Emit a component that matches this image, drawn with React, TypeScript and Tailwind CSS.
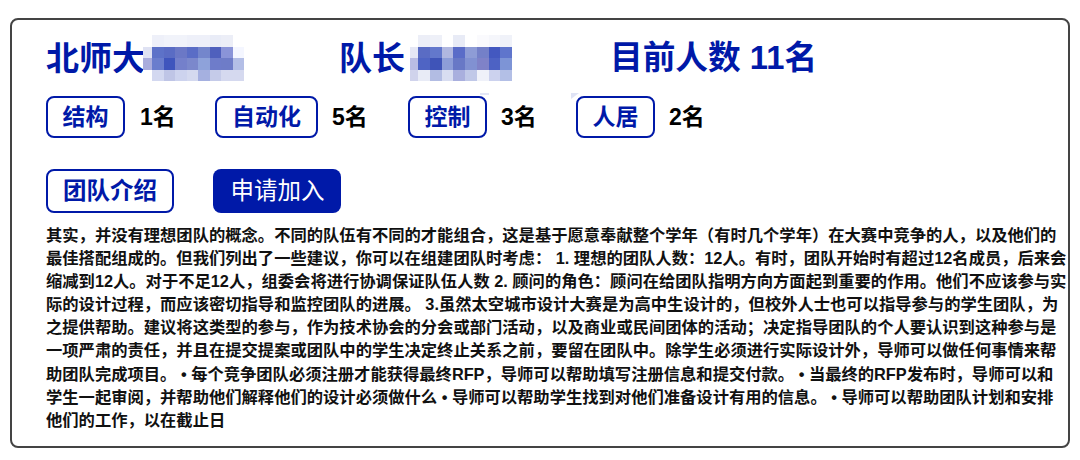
const cjk = { fontFamily: '"Liberation Sans","Noto Sans CJK SC",sans-serif' };

const mosaicA = [
  ["#ffffff", "#eef0f9", "#f1f3fa", "#f1f3fa", "#eef0f9", "#eef0f9", "#e9ecf7", "#eceef7", "#ffffff"],
  ["#dfe2f3", "#5d72c8", "#5a6cc4", "#6b78c6", "#5a6dc6", "#7486cc", "#4f60bd", "#8a94d8", "#f4f6ff"],
  ["#a9acdc", "#6a7dcd", "#3f55bd", "#7480cb", "#7b88cc", "#8ea2da", "#6e7cca", "#6e7cc8", "#b3bee6"],
  ["#ffffff", "#d3d8f0", "#bfc5e6", "#cdd3ee", "#d4d9ef", "#a5b0e0", "#c5cbe9", "#d5d9ef", "#d5d9ef"],
];
const mosaicB = [
  ["#ffffff", "#eceef7", "#eef0f8", "#ffffff", "#e8ebf6", "#ffffff", "#fafafd", "#f5f6fb", "#f0f2f9"],
  ["#e5e7f5", "#5a6cc4", "#6378cc", "#b0b7e0", "#5a6cc8", "#8e9cd6", "#7480c8", "#4358c0", "#5f75cc"],
  ["#b9bce4", "#4f64c4", "#3f54b8", "#8d9dd8", "#6878c6", "#8191d2", "#7f82c8", "#4d62c4", "#7d94d6"],
  ["#d0d3ec", "#e8ebf6", "#b2bce3", "#d8ddf1", "#a9afde", "#c0c8e8", "#eff1f9", "#ccd2ee", "#b3bfe6"],
];

function Mosaic({ rows, className }: { rows: string[][]; className: string }) {
  return (
    <div className={className}>
      {rows.flat().map((c, i) => (
        <div key={i} style={{ backgroundColor: c }} />
      ))}
    </div>
  );
}

function Tag({ label, w }: { label: string; w: string }) {
  return (
    <div className={`flex h-[42px] shrink-0 items-center justify-center rounded-lg border-2 border-[#0019a8] pt-[1px] text-[23px] font-bold text-[#0019a8] ${w}`}>
      {label}
    </div>
  );
}

const lines = [
  "其实，并没有理想团队的概念。不同的队伍有不同的才能组合，这是基于愿意奉献整个学年（有时几个学年）在大赛中竞争的人，以及他们的",
  "最佳搭配组成的。但我们列出了一些建议，你可以在组建团队时考虑： 1. 理想的团队人数：12人。有时，团队开始时有超过12名成员，后来会",
  "缩减到12人。对于不足12人，组委会将进行协调保证队伍人数 2. 顾问的角色：顾问在给团队指明方向方面起到重要的作用。他们不应该参与实",
  "际的设计过程，而应该密切指导和监控团队的进展。 3.虽然太空城市设计大赛是为高中生设计的，但校外人士也可以指导参与的学生团队，为",
  "之提供帮助。建议将这类型的参与，作为技术协会的分会或部门活动，以及商业或民间团体的活动；决定指导团队的个人要认识到这种参与是",
  "一项严肃的责任，并且在提交提案或团队中的学生决定终止关系之前，要留在团队中。除学生必须进行实际设计外，导师可以做任何事情来帮",
  "助团队完成项目。 • 每个竞争团队必须注册才能获得最终RFP，导师可以帮助填写注册信息和提交付款。 • 当最终的RFP发布时，导师可以和",
  "学生一起审阅，并帮助他们解释他们的设计必须做什么 • 导师可以帮助学生找到对他们准备设计有用的信息。 • 导师可以帮助团队计划和安排",
  "他们的工作，以在截止日",
];

export default function App() {
  return (
    <div className="h-[460px] w-[1080px] bg-white pl-[10px] pt-[18px]" style={cjk}>
      <div className="h-[430px] w-[1060px] rounded-lg border-2 border-[#444444] pl-[34px] pt-[15px]">
        <div className="flex h-[46px] items-center whitespace-nowrap text-[33px] font-bold leading-none text-[#0019a8]">
          <span className="w-[97px]">北师大</span>
          <Mosaic rows={mosaicA} className="grid h-[46px] w-[101px] shrink-0 grid-cols-[9px_repeat(8,11.5px)] grid-rows-4" />
          <span className="ml-[95px] w-[71px]">队长</span>
          <Mosaic rows={mosaicB} className="grid h-[46px] w-[102px] shrink-0 grid-cols-[8px_repeat(8,11.75px)] grid-rows-4" />
          <span className="ml-[98px] text-[32.7px]">目前人数 11名</span>
        </div>
        <div className="relative mt-[15px] flex items-center text-[23px] font-bold text-black">
          <div className="absolute left-[434px] top-[-3px] h-[2px] w-[9px] bg-[#e3e6f6]" />
          <svg className="absolute left-[525px] top-[-3px]" width="8" height="6" viewBox="0 0 8 6">
            <polygon points="0,0 8,0 0,6" fill="#dfe3f5" />
          </svg>
          <Tag label="结构" w="w-[79px]" />
          <span className="ml-[15px] w-[75px]">1名</span>
          <Tag label="自动化" w="w-[103px]" />
          <span className="ml-[14px] w-[76px]">5名</span>
          <Tag label="控制" w="w-[79px]" />
          <span className="ml-[14px] w-[75px]">3名</span>
          <Tag label="人居" w="w-[79px]" />
          <span className="ml-[14px]">2名</span>
        </div>
        <div className="mt-[31px] flex text-[23.5px]">
          <div className="flex h-[44px] w-[128px] items-center justify-center rounded-lg border-2 border-[#0019a8] pt-[1px] font-bold text-[#0019a8]">
            团队介绍
          </div>
          <div className="ml-[39px] flex h-[44px] w-[128px] items-center justify-center rounded-lg bg-[#0019a8] pl-[1px] pt-[1px] text-white">
            申请加入
          </div>
        </div>
        <div className="mt-[11px] whitespace-nowrap text-[16.31px] font-bold leading-[23.1px] text-[#111111]">
          {lines.map((l) => (
            <div key={l}>{l}</div>
          ))}
        </div>
      </div>
    </div>
  );
}
